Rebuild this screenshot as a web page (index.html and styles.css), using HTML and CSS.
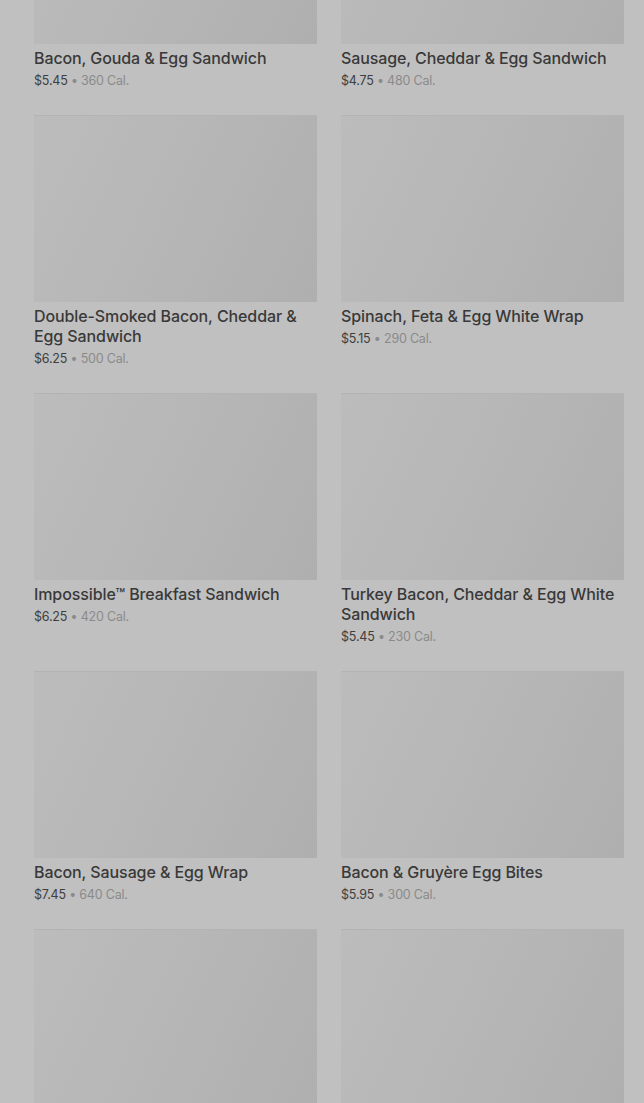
FILE: index.html
```html
<!DOCTYPE html>
<html lang="en">
<head>
  <meta charset="UTF-8">
  <meta name="viewport" content="width=device-width, initial-scale=1.0">
  <title>Hot Breakfast</title>
  <link rel="stylesheet" href="styles.css">
</head>
<body>
  <div class="menu-grid">
    <div class="menu-item">
      <div class="item-image"></div>
      <h3 class="item-name">Bacon, Gouda &amp; Egg Sandwich</h3>
      <p class="item-info">$5.45 <span class="item-cal">&bull; 360 Cal.</span></p>
    </div>
    <div class="menu-item">
      <div class="item-image"></div>
      <h3 class="item-name">Sausage, Cheddar &amp; Egg Sandwich</h3>
      <p class="item-info">$4.75 <span class="item-cal">&bull; 480 Cal.</span></p>
    </div>
    <div class="menu-item">
      <div class="item-image"></div>
      <h3 class="item-name">Double-Smoked Bacon, Cheddar &amp; Egg Sandwich</h3>
      <p class="item-info">$6.25 <span class="item-cal">&bull; 500 Cal.</span></p>
    </div>
    <div class="menu-item">
      <div class="item-image"></div>
      <h3 class="item-name">Spinach, Feta &amp; Egg White Wrap</h3>
      <p class="item-info">$5.15 <span class="item-cal">&bull; 290 Cal.</span></p>
    </div>
    <div class="menu-item">
      <div class="item-image"></div>
      <h3 class="item-name">Impossible&trade; Breakfast Sandwich</h3>
      <p class="item-info">$6.25 <span class="item-cal">&bull; 420 Cal.</span></p>
    </div>
    <div class="menu-item">
      <div class="item-image"></div>
      <h3 class="item-name">Turkey Bacon, Cheddar &amp; Egg White Sandwich</h3>
      <p class="item-info">$5.45 <span class="item-cal">&bull; 230 Cal.</span></p>
    </div>
    <div class="menu-item">
      <div class="item-image"></div>
      <h3 class="item-name">Bacon, Sausage &amp; Egg Wrap</h3>
      <p class="item-info">$7.45 <span class="item-cal">&bull; 640 Cal.</span></p>
    </div>
    <div class="menu-item">
      <div class="item-image"></div>
      <h3 class="item-name">Bacon &amp; Gruyère Egg Bites</h3>
      <p class="item-info">$5.95 <span class="item-cal">&bull; 300 Cal.</span></p>
    </div>
    <div class="menu-item">
      <div class="item-image"></div>
    </div>
    <div class="menu-item">
      <div class="item-image"></div>
    </div>
  </div>
</body>
</html>
```

FILE: styles.css
```css
body {
  background: #c0c0c0;
  font-family: Inter, "Noto Sans", Arial, sans-serif;
  margin: 0;
  padding: 0;
  overflow: hidden;
}

.menu-grid {
  display: grid;
  grid-template-columns: 283px 283px;
  column-gap: 24px;
  row-gap: 25px;
  margin-top: -143px;
  padding-left: 34px;
}

.menu-item {
  display: flex;
  flex-direction: column;
}

.item-image {
  height: 187px;
  background: linear-gradient(115deg, #bcbcbc 0%, #b6b6b6 50%, #afafaf 100%);
  border-top: 1px solid #b3b3b3;
  box-sizing: border-box;
}

.item-name {
  margin: 4px 0 0;
  font-size: 16px;
  line-height: 20px;
  font-weight: 500;
  color: #393939;
  letter-spacing: -0.1px;
}

.item-info {
  margin: 4px 0 0;
  font-size: 12.5px;
  line-height: 18px;
  color: #3e3e3e;
  letter-spacing: -0.2px;
}

.item-cal {
  color: #8a8a8a;
}
```
